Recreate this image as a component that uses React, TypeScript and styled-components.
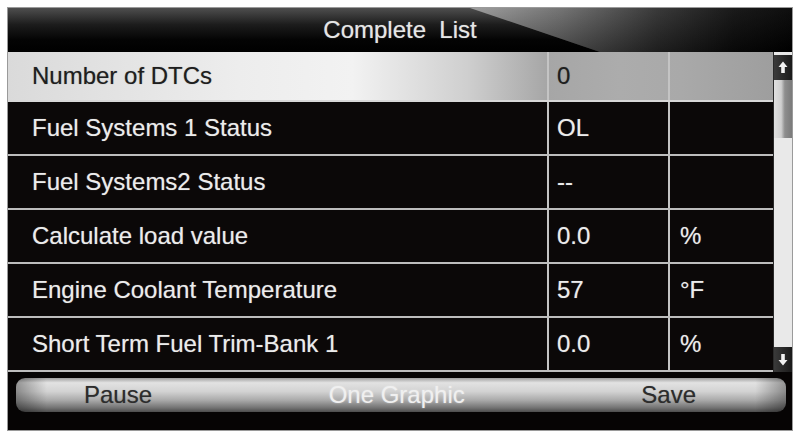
import styled, { createGlobalStyle } from "styled-components";

const GlobalStyle = createGlobalStyle`
  html, body {
    margin: 0;
    padding: 0;
    background: #ffffff;
  }
  body {
    font-family: "Liberation Sans", Arial, sans-serif;
  }
`;

const Screen = styled.div`
  margin: 8px 3px 2px 8px;
  width: 784px;
  height: 422px;
  background: #060404;
  display: flex;
  flex-direction: column;
  box-shadow: 0 0 0 1px #9a9a9a;
`;

const Header = styled.header`
  position: relative;
  height: 44px;
  flex: none;
  display: flex;
  align-items: center;
  justify-content: center;
  overflow: hidden;
  background: linear-gradient(#4e4e4e 0%, #1c1c1c 38%, #040404 72%, #000 100%);

  /* diagonal sheen on the right of the title bar */
  &::after {
    content: "";
    position: absolute;
    top: 0;
    bottom: 0;
    left: 462px;
    right: 0;
    clip-path: polygon(0 0, 100% 0, 100% 100%, 130px 100%);
    background:
      linear-gradient(rgba(255, 255, 255, 0.06), rgba(0, 0, 0, 0.35)),
      linear-gradient(to right, #9a9a9a 0%, #6c6c6c 28%, #2e2e2e 58%, #0c0c0c 82%, #000 100%);
  }
`;

const Title = styled.h1`
  position: relative;
  z-index: 1;
  margin: 0;
  font-size: 24px;
  font-weight: normal;
  color: #e6e6e6;
  white-space: pre;
  text-shadow: 0 0 1px rgba(255, 255, 255, 0.5);
`;

const Main = styled.div`
  display: flex;
  height: 320px;
  flex: none;
`;

const Table = styled.div`
  width: 765px;
  display: flex;
  flex-direction: column;
`;

const Row = styled.div<{ $active?: boolean }>`
  display: grid;
  grid-template-columns: 541px 121px 1fr;
  box-sizing: border-box;
  height: ${(p) => (p.$active ? 50 : 54)}px;
  border-bottom: 2px solid ${(p) => (p.$active ? "#d8d8d8" : "#bdbdbd")};
  color: ${(p) => (p.$active ? "#1e1e1e" : "#ececec")};
  text-shadow: ${(p) => (p.$active ? "0 0 1px rgba(0,0,0,0.4)" : "0 0 1px rgba(255,255,255,0.45)")};
  background: ${(p) =>
    p.$active
      ? "linear-gradient(to right, #dadada 0%, #ededed 30%, #f2f2f2 45%, #cfcfcf 60%, #a6a6a6 70.5%, #acacac 80%, #a9a9a9 88%, #9e9e9e 100%)"
      : "#0b0808"};
`;

const Cell = styled.div<{ $pad: number }>`
  display: flex;
  align-items: center;
  padding-left: ${(p) => p.$pad}px;
  border-right: 2px solid #c4c4c4;
  font-size: 24px;
  white-space: nowrap;

  &:last-child {
    border-right: none;
  }
`;

const ScrollBar = styled.div`
  width: 19px;
  display: flex;
  flex-direction: column;
  background: #e9e9e9;
  border-left: 1px solid #2a2a2a;
  box-sizing: border-box;
`;

const ArrowBox = styled.div<{ $top?: boolean }>`
  height: 25px;
  margin-top: ${(p) => (p.$top ? "3px" : "auto")};
  display: flex;
  align-items: center;
  justify-content: center;
  background: linear-gradient(to right, #3a3a3a, #1a1a1a);
`;

const Thumb = styled.div`
  height: 58px;
  background: linear-gradient(to right, #e0e0e0 0%, #cfcfcf 40%, #8e8e8e 60%, #7a7a7a 100%);
`;

const Footer = styled.footer`
  flex: 1;
  padding: 6px 6px 0 8px;
`;

const ButtonBar = styled.div`
  height: 34px;
  border-radius: 9px;
  display: flex;
  align-items: center;
  justify-content: space-between;
  padding: 0 90px 0 68px;
  background:
    linear-gradient(to right, rgba(0, 0, 0, 0.35) 0%, rgba(0, 0, 0, 0) 4%, rgba(0, 0, 0, 0) 96%, rgba(0, 0, 0, 0.35) 100%),
    linear-gradient(#a0a0a0 0%, #e2e2e2 14%, #d2d2d2 40%, #a8a8a8 66%, #727272 88%, #4c4c4c 100%);
`;

const ButtonLabel = styled.span<{ $light?: boolean }>`
  font-size: 24px;
  color: ${(p) => (p.$light ? "#f0f0f0" : "#2c2c2c")};
  text-shadow: ${(p) => (p.$light ? "0 0 2px rgba(255,255,255,0.4)" : "0 0 1px rgba(0,0,0,0.35)")};
`;

function Arrow({ down }: { down?: boolean }) {
  return (
    <svg width="10" height="13" viewBox="0 0 10 13" style={{ transform: down ? "rotate(180deg)" : undefined }}>
      <path d="M5 0.5 L9.5 6 L6.8 6 L6.8 12 L3.2 12 L3.2 6 L0.5 6 Z" fill="#f2f2f2" />
    </svg>
  );
}

const rows = [
  { label: "Number of DTCs", value: "0", unit: "" },
  { label: "Fuel Systems 1 Status", value: "OL", unit: "" },
  { label: "Fuel Systems2 Status", value: "--", unit: "" },
  { label: "Calculate load value", value: "0.0", unit: "%" },
  { label: "Engine Coolant Temperature", value: "57", unit: "°F" },
  { label: "Short Term Fuel Trim-Bank 1", value: "0.0", unit: "%" },
];

export default function App() {
  return (
    <>
      <GlobalStyle />
      <Screen>
        <Header>
          <Title>Complete  List</Title>
        </Header>
        <Main>
          <Table>
            {rows.map((r, i) => (
              <Row key={r.label} $active={i === 0}>
                <Cell $pad={24}>{r.label}</Cell>
                <Cell $pad={8}>{r.value}</Cell>
                <Cell $pad={10}>{r.unit}</Cell>
              </Row>
            ))}
          </Table>
          <ScrollBar>
            <ArrowBox $top>
              <Arrow />
            </ArrowBox>
            <Thumb />
            <ArrowBox>
              <Arrow down />
            </ArrowBox>
          </ScrollBar>
        </Main>
        <Footer>
          <ButtonBar>
            <ButtonLabel>Pause</ButtonLabel>
            <ButtonLabel $light>One Graphic</ButtonLabel>
            <ButtonLabel>Save</ButtonLabel>
          </ButtonBar>
        </Footer>
      </Screen>
    </>
  );
}
